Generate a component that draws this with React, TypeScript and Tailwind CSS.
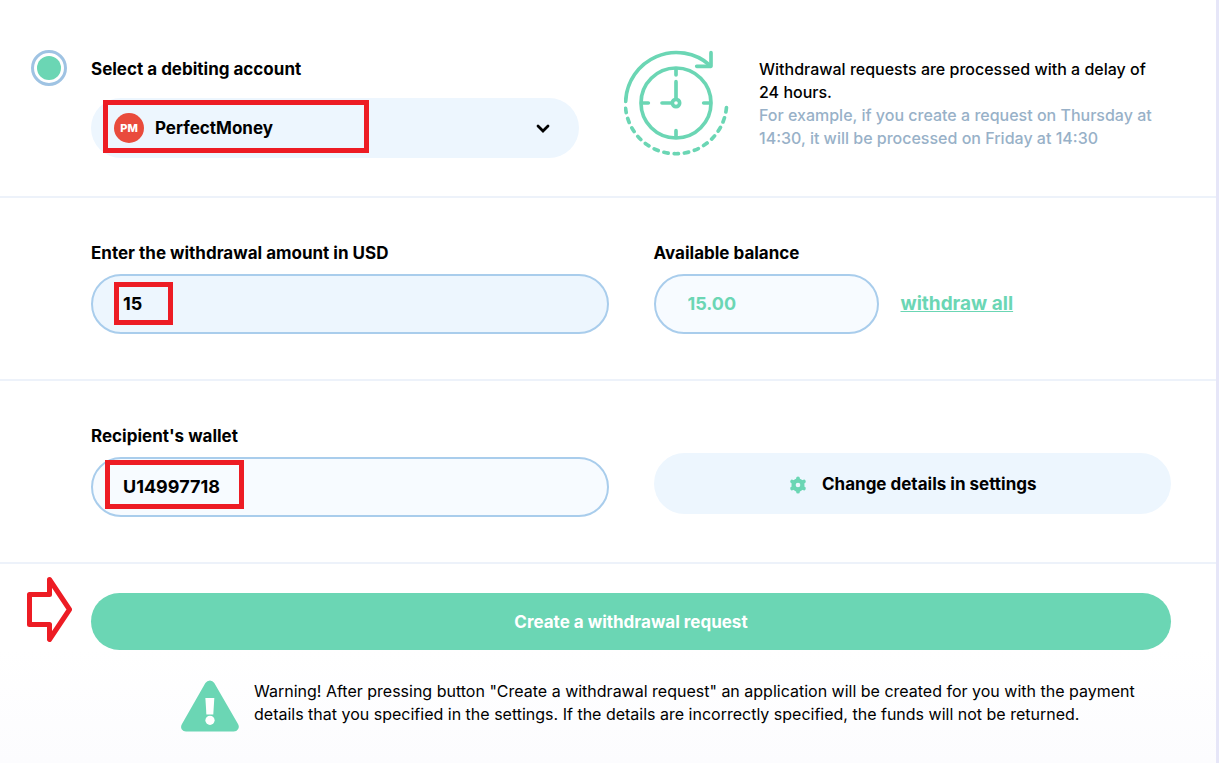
import React from 'react';

const ClockIcon: React.FC = () => (
  <svg
    viewBox="42 30 315 318"
    className="h-[106px] w-[105px] shrink-0 text-[#6bd6b4]"
    fill="none"
    stroke="currentColor"
    strokeWidth="11"
    strokeLinecap="round"
    strokeLinejoin="round"
    aria-hidden="true"
  >
    <path d="M47 184A152 152 0 0 1 300 76" />
    <path d="M303 38V79H260" />
    <path d="M46.8 205A152 152 0 0 0 349.9 194" strokeDasharray="13 18" />
    <circle cx="198" cy="189" r="105" />
    <circle cx="198" cy="189" r="11" />
    <path d="M198 125V177M156 189H186M198 88V105M198 272V290M97 189H115M281 189H300" />
  </svg>
);

const GearIcon: React.FC = () => (
  <svg
    viewBox="0 0 18 18"
    className="size-5 shrink-0 text-[#6bd6b4]"
    fill="none"
    stroke="currentColor"
    strokeLinecap="round"
    aria-hidden="true"
  >
    <circle cx="9" cy="9" r="4" strokeWidth="3.8" />
    <path
      d="M9 4.5V3M9 13.5V15M12.9 6.7L14.3 5.9M5.1 6.7L3.7 5.9M12.9 11.3L14.3 12.1M5.1 11.3L3.7 12.1"
      strokeWidth="3.4"
    />
  </svg>
);

const WarningIcon: React.FC = () => (
  <svg viewBox="0 0 176 155" className="mt-1 h-[52px] w-[58px] shrink-0" aria-hidden="true">
    <path
      d="M74 8Q79 0 88 0Q96 0 101 8L173 132Q178 141 173 148Q169 155 160 155H15Q7 155 2 148Q-2 141 3 132Z"
      fill="#6bd6b4"
    />
    <path d="M74 53H101L98 103H77Z" fill="#fff" />
    <circle cx="88" cy="121" r="14" fill="#fff" />
  </svg>
);

const ArrowMark: React.FC = () => (
  <svg viewBox="0 0 45 65" className="h-[65px] w-[45px] shrink-0" aria-hidden="true">
    <path
      d="M2.5 17.5H22.5V2.5L42.5 32.5L22.5 62.5V47.5H2.5Z"
      fill="#fff"
      stroke="#ed1c24"
      strokeWidth="5"
      strokeLinejoin="round"
    />
  </svg>
);

const Highlight: React.FC<{ className: string }> = ({ className }) => (
  <span className={`pointer-events-none absolute border-5 border-[#ed1c24] ${className}`} />
);

const labelClass = 'block leading-[23px] font-bold';
const fieldClass = 'h-[60px] w-full rounded-full border-2 border-[#a9cdec] pb-0.5 text-lg font-bold outline-none';

const AccountSection: React.FC = () => (
  <section className="flex gap-6 border-b-2 border-[#edf2fa] pt-[50px] pr-[45px] pb-[38px] pl-[31px]">
    <input
      type="radio"
      defaultChecked
      aria-label="Debiting account"
      className="size-9 shrink-0 appearance-none rounded-full border-3 border-[#9fc3e3] bg-[#6bd6b4] bg-clip-content p-[3px]"
    />
    <div className="grid flex-1 grid-cols-[488fr_547fr] gap-[45px]">
      <div>
        <label htmlFor="account" className="mt-2 block leading-[23px] font-bold">
          Select a debiting account
        </label>
        <div className="relative mt-[17px]">
          <select
            id="account"
            className="h-[60px] w-full appearance-none rounded-full bg-[#edf6fe] pt-0.5 pl-16 font-bold outline-none"
          >
            <option>PerfectMoney</option>
          </select>
          <span className="pointer-events-none absolute top-[15px] left-[23px] flex size-[30px] items-center justify-center rounded-full bg-[#e94b3c] text-[11px] font-extrabold text-white">
            PM
          </span>
          <svg
            viewBox="0 0 14 9"
            className="pointer-events-none absolute top-[26px] right-[29px] h-[9px] w-[14px]"
            fill="none"
            stroke="#000"
            strokeWidth="2.8"
            strokeLinecap="round"
            aria-hidden="true"
          >
            <path d="M2 2L7 7L12 2" />
          </svg>
          <Highlight className="top-[2px] left-3 h-[53px] w-[266px]" />
        </div>
      </div>
      <div className="flex gap-[30px]">
        <ClockIcon />
        <p className="mt-2 text-base leading-[23px] font-medium">
          Withdrawal requests are processed with a delay of 24&nbsp;hours.{' '}
          <span className="block text-[#98b1c8]">
            For example, if you create a request on Thursday at 14:30, it will be processed on Friday at 14:30
          </span>
        </p>
      </div>
    </div>
  </section>
);

const AmountSection: React.FC = () => (
  <section className="grid grid-cols-2 gap-[45px] border-b-2 border-[#edf2fa] pt-11 pr-[45px] pb-[45px] pl-[91px]">
    <div>
      <label htmlFor="amount" className={labelClass}>
        Enter the withdrawal amount in USD
      </label>
      <div className="relative mt-[9px]">
        <input id="amount" type="text" defaultValue="15" className={`${fieldClass} bg-[#edf6fe] px-[30px]`} />
        <Highlight className="top-2 left-[23px] h-[43px] w-[59px]" />
      </div>
    </div>
    <div>
      <label htmlFor="balance" className={labelClass}>
        Available balance
      </label>
      <div className="mt-[9px] flex items-center gap-[22px]">
        <div className="w-[225px]">
          <input
            id="balance"
            type="text"
            readOnly
            defaultValue="15.00"
            className={`${fieldClass} bg-[#f7fbff] px-8 text-[#6bd6b4]`}
          />
        </div>
        <a href="#all" className="text-[19px] font-bold text-[#6bd6b4] underline">
          withdraw all
        </a>
      </div>
    </div>
  </section>
);

const WalletSection: React.FC = () => (
  <section className="grid grid-cols-2 gap-[45px] border-b-2 border-[#edf2fa] pt-11 pr-[45px] pb-[45px] pl-[91px]">
    <div>
      <label htmlFor="wallet" className={labelClass}>
        Recipient's wallet
      </label>
      <div className="relative mt-[9px]">
        <input id="wallet" type="text" defaultValue="U14997718" className={`${fieldClass} bg-[#f7fbff] px-[30px]`} />
        <Highlight className="top-[3px] left-[14px] h-[49px] w-[139px]" />
      </div>
    </div>
    <button
      type="button"
      className="mt-7 flex h-[61px] items-center justify-center gap-[14px] rounded-full bg-[#edf6fe] pt-0.5 font-bold"
    >
      <GearIcon />
      Change details in settings
    </button>
  </section>
);

const SubmitSection: React.FC = () => (
  <section className="pt-[13px] pr-[45px] pb-6 pl-[27px]">
    <div className="flex items-start gap-[19px]">
      <ArrowMark />
      <button type="submit" className="mt-4 h-[57px] flex-1 rounded-full bg-[#6bd6b4] pt-0.5 font-bold text-white">
        Create a withdrawal request
      </button>
    </div>
    <div className="mt-[26px] flex gap-[15px] pl-[154px]">
      <WarningIcon />
      <p className="mt-1 text-base leading-[23px]">
        Warning! After pressing button "Create a withdrawal request" an application will be created for you with the
        payment details that you specified in the settings. If the details are incorrectly specified, the funds will not
        be returned.
      </p>
    </div>
  </section>
);

const App: React.FC = () => {
  return (
    <form
      onSubmit={(e) => e.preventDefault()}
      className="min-h-screen border-r-3 border-[#e6e6f8] bg-gradient-to-b from-white from-85% to-[#fcfcfe] font-['Inter',sans-serif] text-[17px] text-black"
    >
      <AccountSection />
      <AmountSection />
      <WalletSection />
      <SubmitSection />
    </form>
  );
};

export default App;
